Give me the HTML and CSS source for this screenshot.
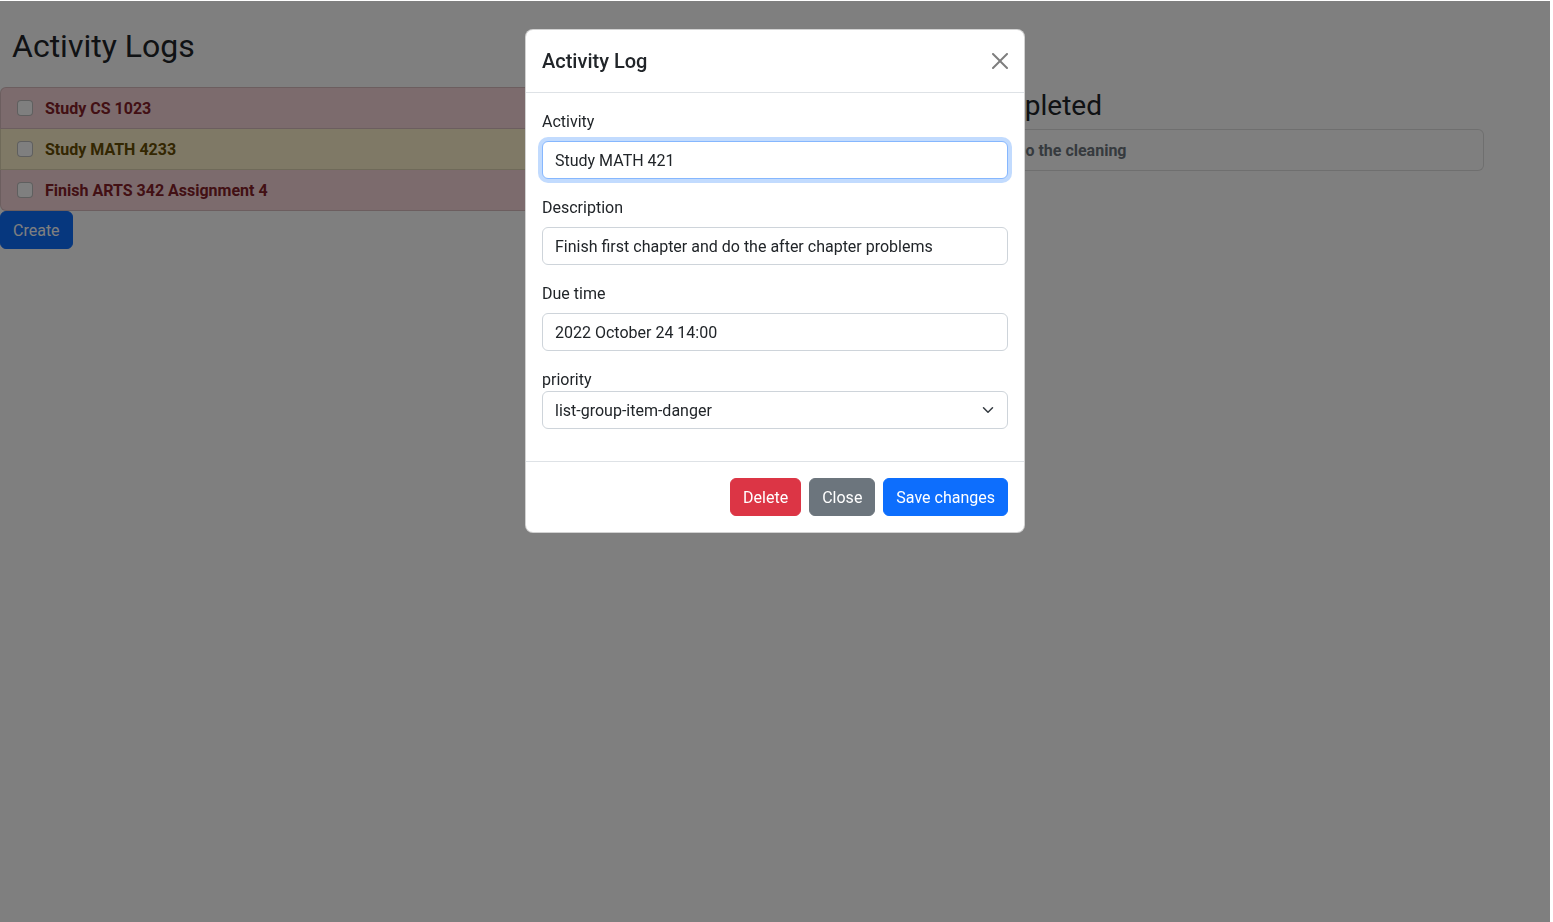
FILE: index.html
```html
<!DOCTYPE html>
<html lang="en">
<head>
<meta charset="utf-8">
<title>Activity Logs</title>
<link rel="stylesheet" href="styles.css">
</head>
<body>
<div class="page">
  <div class="col-left">
    <h2 class="title">Activity Logs</h2>
    <ul class="list">
      <li class="item danger"><input type="checkbox" class="check">Study CS 1023</li>
      <li class="item warning"><input type="checkbox" class="check">Study MATH 4233</li>
      <li class="item danger"><input type="checkbox" class="check">Finish ARTS 342 Assignment 4</li>
    </ul>
    <button class="btn btn-primary">Create</button>
  </div>
  <div class="col-right">
    <h3 class="title2">Completed</h3>
    <ul class="list">
      <li class="item muted"><input type="checkbox" class="check" checked>Do the cleaning</li>
    </ul>
  </div>
</div>

<div class="backdrop"></div>

<div class="modal-wrap">
  <div class="modal">
    <div class="modal-header">
      <h5 class="modal-title">Activity Log</h5>
      <button class="btn-close" aria-label="Close">
        <svg viewBox="0 0 16 16" width="16" height="16"><path d="M.293.293a1 1 0 0 1 1.414 0L8 6.586 14.293.293a1 1 0 1 1 1.414 1.414L9.414 8l6.293 6.293a1 1 0 0 1-1.414 1.414L8 9.414l-6.293 6.293a1 1 0 0 1-1.414-1.414L6.586 8 .293 1.707a1 1 0 0 1 0-1.414z"/></svg>
      </button>
    </div>
    <div class="modal-body">
      <div class="field">
        <label class="label">Activity</label>
        <input class="input focus" type="text" value="Study MATH 421">
      </div>
      <div class="field">
        <label class="label">Description</label>
        <input class="input" type="text" value="Finish first chapter and do the after chapter problems">
      </div>
      <div class="field">
        <label class="label">Due time</label>
        <input class="input" type="text" value="2022 October 24 14:00">
      </div>
      <div class="field">
        <label class="label tight">priority</label>
        <div class="select-wrap">
          <select class="input select">
            <option>list-group-item-danger</option>
          </select>
          <svg class="chevron" viewBox="0 0 16 16" width="16" height="12"><path d="m2 5 6 6 6-6" fill="none" stroke="#343a40" stroke-width="2" stroke-linecap="round" stroke-linejoin="round"/></svg>
        </div>
      </div>
    </div>
    <div class="modal-footer">
      <button class="btn btn-danger">Delete</button>
      <button class="btn btn-secondary">Close</button>
      <button class="btn btn-primary">Save changes</button>
    </div>
  </div>
</div>
</body>
</html>
```

FILE: styles.css
```css
* { box-sizing: border-box; }

body {
  margin: 0;
  width: 1553px;
  height: 922px;
  overflow: hidden;
  background: #fff;
  color: #212529;
  font-family: Roboto, "Liberation Sans", sans-serif;
  font-size: 16px;
  line-height: 1.5;
}

.page {
  width: 1550px;
  display: flex;
  justify-content: space-between;
  padding-right: 66px;
}

.col-left { width: 774px; }

.title {
  margin: 27px 0 22px;
  padding-left: 12px;
  font-size: 32px;
  line-height: 38px;
  font-weight: 400;
}

.list {
  list-style: none;
  margin: 0;
  padding: 0;
  display: flex;
  flex-direction: column;
}

.item {
  display: flex;
  align-items: center;
  padding: 9px 16px 7px;
  border: 1px solid rgba(0, 0, 0, .125);
  font-weight: 700;
}
.item + .item { border-top-width: 0; }
.item:first-child { border-top-left-radius: 6px; border-top-right-radius: 6px; }
.item:last-child { border-bottom-left-radius: 6px; border-bottom-right-radius: 6px; }

.danger { background: #f8d7da; color: #842029; }
.warning { background: #fff3cd; color: #664d03; }
.muted { background: #fff; color: #6c757d; }

.check {
  appearance: none;
  -webkit-appearance: none;
  width: 16px;
  height: 16px;
  margin: -2px 12px 0 0;
  flex: none;
  border: 1px solid rgba(0, 0, 0, .25);
  border-radius: 4px;
  background: #fff;
}

.btn {
  font: inherit;
  font-size: 16px;
  line-height: 24px;
  padding: 7px 12px 5px;
  border: 1px solid transparent;
  border-radius: 6px;
  color: #fff;
  cursor: pointer;
}
.btn-primary { background: #0d6efd; border-color: #0d6efd; }
.btn-danger { background: #dc3545; border-color: #dc3545; }
.btn-secondary { background: #6c757d; border-color: #6c757d; }

.col-right { width: 514px; padding-top: 89px; }

.title2 {
  margin: 0 0 6px -4px;
  font-size: 28px;
  line-height: 34px;
  font-weight: 400;
}

.backdrop {
  position: fixed;
  top: 1px;
  left: 0;
  width: 1550px;
  bottom: 0;
  background: rgba(0, 0, 0, .5);
}

.modal-wrap {
  position: fixed;
  top: 1px;
  left: 0;
  width: 1550px;
  bottom: 0;
  display: flex;
  justify-content: center;
  align-items: flex-start;
  padding-top: 28px;
}

.modal {
  width: 500px;
  background: #fff;
  border: 1px solid rgba(0, 0, 0, .175);
  border-radius: 8px;
}

.modal-header {
  display: flex;
  align-items: center;
  justify-content: space-between;
  padding: 16px;
  border-bottom: 1px solid #dee2e6;
}

.modal-title {
  margin: 0;
  padding-top: 1px;
  font-size: 20px;
  line-height: 29px;
  font-weight: 500;
}

.btn-close {
  display: flex;
  padding: 0;
  border: 0;
  background: transparent;
  opacity: .5;
  cursor: pointer;
}

.modal-body { padding: 16px; }

.field { margin-bottom: 16px; }

.label { display: block; padding-top: 1px; margin-bottom: 7px; }
.label.tight { margin-bottom: -1px; }

.input {
  display: block;
  width: 100%;
  padding: 7px 12px 5px;
  font: inherit;
  font-size: 16px;
  line-height: 24px;
  color: #212529;
  background: #fff;
  border: 1px solid #ced4da;
  border-radius: 6px;
  outline: 0;
}
.input.focus {
  border-color: #86b7fe;
  box-shadow: 0 0 0 4px rgba(13, 110, 253, .25);
}

.select-wrap { position: relative; }
.select {
  appearance: none;
  -webkit-appearance: none;
  padding-right: 36px;
}
.chevron {
  position: absolute;
  right: 12px;
  top: 13px;
  pointer-events: none;
}

.modal-footer {
  display: flex;
  justify-content: flex-end;
  align-items: center;
  gap: 8px;
  padding: 16px;
  border-top: 1px solid #dee2e6;
}
```
